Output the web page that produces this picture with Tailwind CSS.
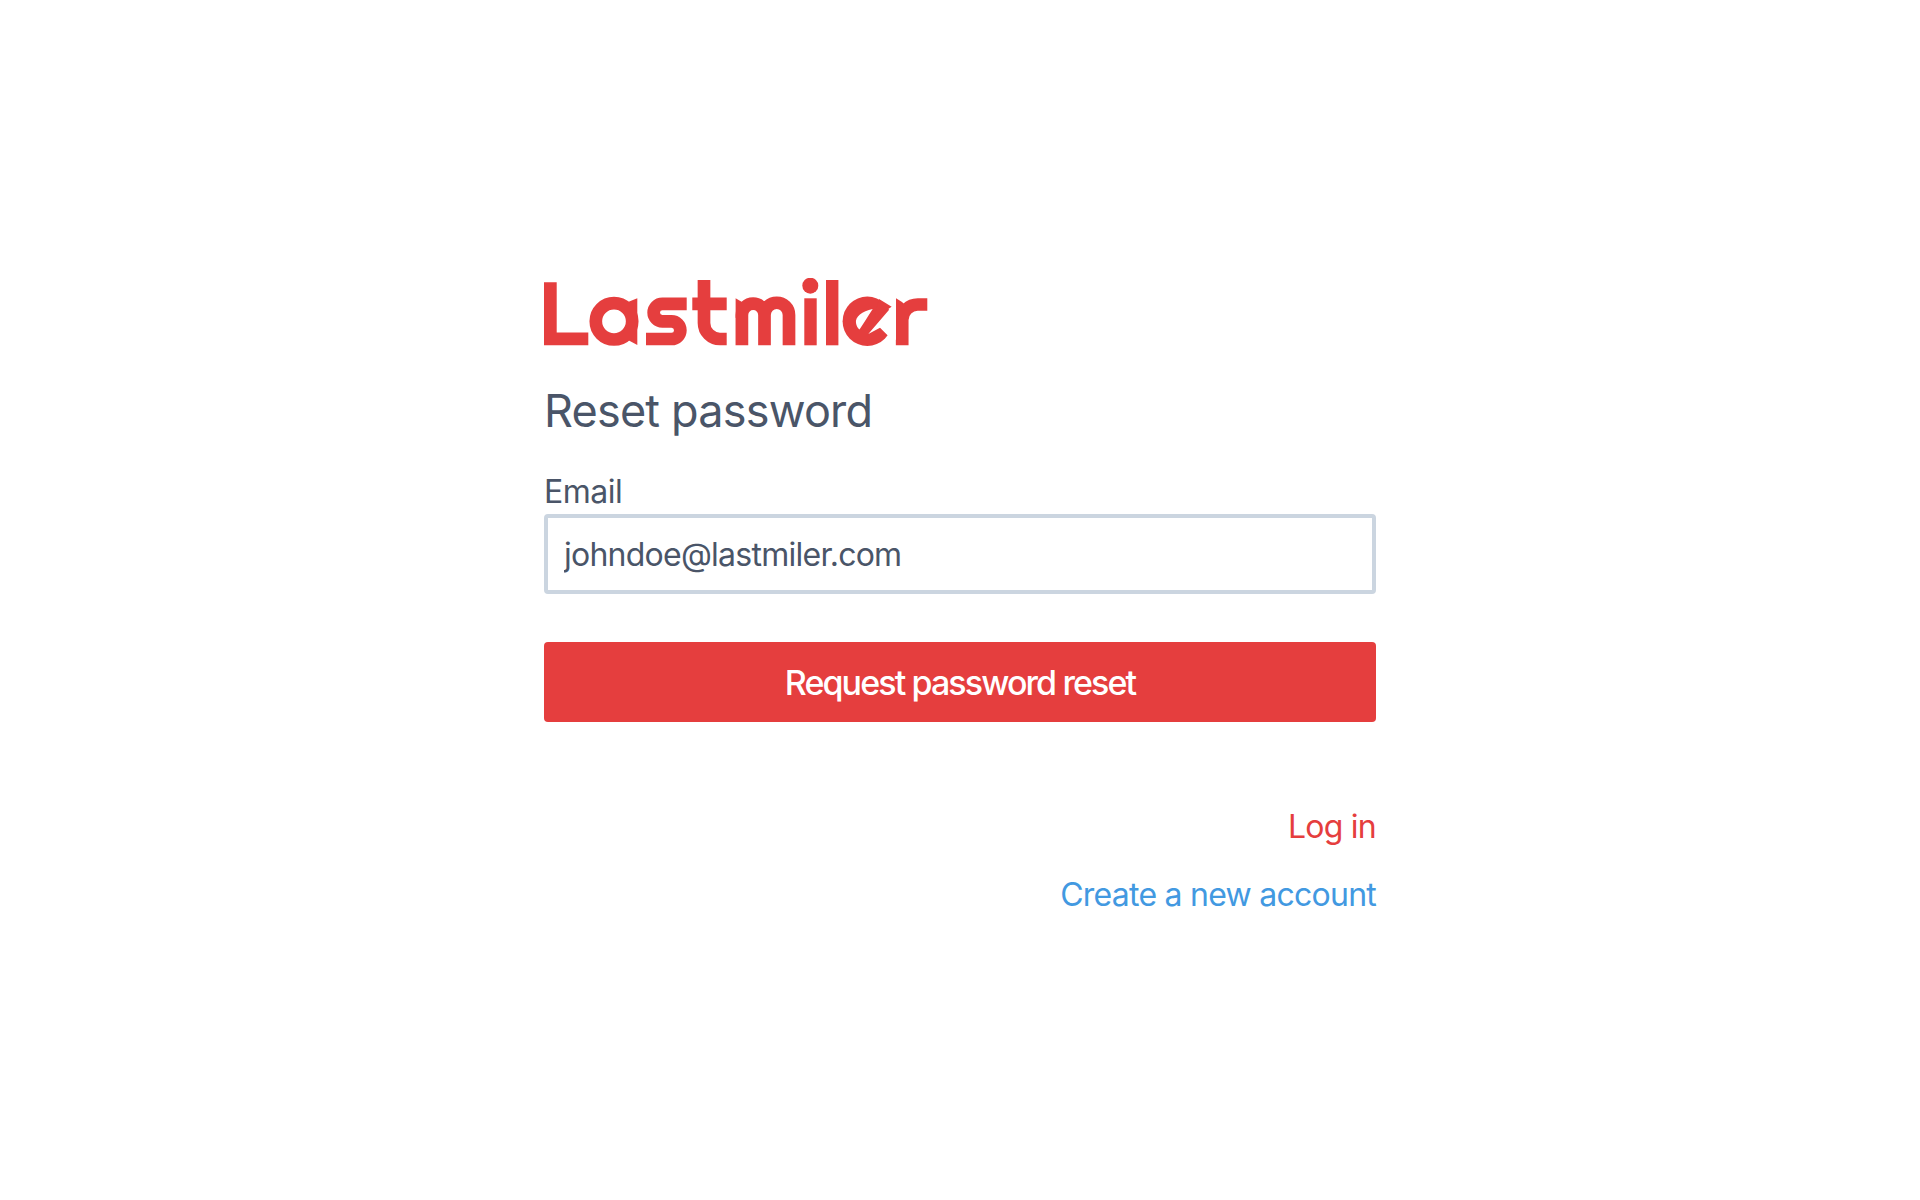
<!doctype html>
<html lang="en">
<head>
<meta charset="utf-8">
<title>Reset password</title>
<script src="https://cdn.jsdelivr.net/npm/@tailwindcss/browser@4"></script>
</head>
<body class="bg-white font-[Inter,sans-serif] text-[#4a5568]">
<main class="mx-auto w-[832px] pt-[278px]">
  <svg role="img" aria-label="Lastmiler" class="block h-[70px] w-[386px]" viewBox="0 0 386 70" fill="none">
    <g fill="#e53e3e">
      <polygon points="0,4.3 12.7,4.3 12.7,54.6 44.3,54.6 44.3,67.3 0,67.3"/>
      <polygon points="84,24 93.3,20.3 93.3,67 84,62"/>
      <circle cx="266.3" cy="7.7" r="8"/>
      <rect x="260.3" y="20.3" width="12.4" height="47"/>
      <rect x="282" y="2" width="12.4" height="65.3"/>
      <polygon points="191.6,20.3 198,24 204.3,30 191.6,40"/>
      <polygon points="352,20.3 358,24 364.3,30 352,40"/>
      <circle cx="323.3" cy="43.3" r="24.7"/>
      <polygon points="347.7,28.7 335,21 330,40"/>
    </g>
    <g stroke="#e53e3e" stroke-width="12.7">
      <circle cx="70" cy="43.3" r="18.2"/>
      <path d="M142.7 25.8H118.4A8.75 8.75 0 0 0 118.4 43.3H127.5A8.85 8.85 0 0 1 127.5 61H102"/>
      <path d="M160 2V45A16 16 0 0 0 176 61H182.7M148.3 25.8H182.7"/>
      <path d="M197.9 67.3V37A11.3 11.3 0 0 1 220.5 37V67.3M220.5 37A12.25 12.25 0 0 1 245 37V67.3"/>
      <path d="M358.2 67.3V42A15.5 15.5 0 0 1 373.7 26.5H383.3"/>
    </g>
    <path fill="#fff" d="M328.7 31C318 33 311 39 312 45C312.5 48 313.5 50 315.5 51.5C320 45 324 38 328.7 31Z"/>
    <polygon fill="#fff" points="347.7,28.7 324.3,56 336,49.7 344.3,58 352,62 352,28.7"/>
  </svg>
  <h1 class="mt-[36px] text-[45px] leading-[54px] font-normal tracking-[-0.8px]">Reset password</h1>
  <form class="mt-[31px]">
    <label class="block text-[32px] leading-[45px] tracking-[-0.5px]" for="email">Email</label>
    <input id="email" class="block h-[80px] w-full rounded-[4px] border-[4px] border-[#cbd5e0] px-[16px] text-[32px] tracking-[-0.75px] text-[#4a5568]" value="johndoe@lastmiler.com">
    <button type="button" class="mt-[48px] block h-[80px] w-full rounded-[4px] bg-[#e53e3e] pt-[1px] text-[34px] font-medium tracking-[-1.9px] text-white">Request password reset</button>
  </form>
  <nav class="mt-[85px] flex flex-col items-end gap-[28px] text-[32px] leading-[40px] tracking-[-0.75px]">
    <a class="text-[#e53e3e]" href="#">Log in</a>
    <a class="text-[#4299e1]" href="#">Create a new account</a>
  </nav>
</main>
</body>
</html>
